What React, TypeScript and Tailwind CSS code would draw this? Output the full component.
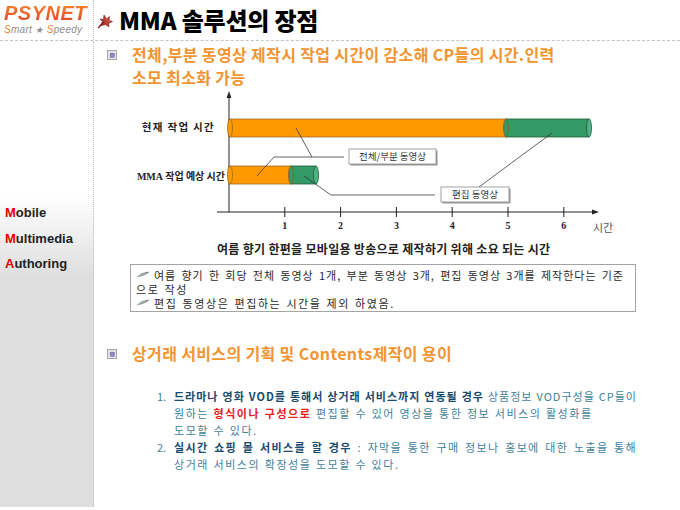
const KR = "'Noto Sans CJK KR', 'Noto Sans', sans-serif"

function BulletIcon({ className = '' }: { className?: string }) {
  return (
    <svg width="10" height="10" viewBox="0 0 10 10" className={className}>
      <rect x="0.5" y="0.5" width="9" height="9" fill="#f2f2f2" stroke="#a8a8a8" />
      <rect x="1.5" y="1.5" width="7" height="7" fill="#ffffff" stroke="#d4d4d4" strokeWidth="0.6" />
      <rect x="3" y="3" width="4.5" height="4.5" fill="#9386c4" stroke="#6f63a3" strokeWidth="0.5" />
    </svg>
  )
}

function QuillIcon() {
  return (
    <svg width="14" height="8" viewBox="0 0 14 8" className="inline-block align-[1px] mr-[4px]">
      <path d="M0.5 6.5 C3 3.2, 8 0.8, 13.5 0.8 C11 3.4, 6 5.6, 0.5 6.5 Z" fill="#7d8a86" />
      <path d="M2 5.6 L9 2.2" stroke="#d9dfdc" strokeWidth="0.7" />
    </svg>
  )
}

function LeafIcon() {
  return (
    <svg width="16" height="17" viewBox="0 0 16 17">
      <path
        d="M3 14 L5.5 9.5 L3 7 L6.5 7.5 L7 3 L9.5 7 L12.5 4.5 L12 8.5 L15.5 9.5 L11.5 11.5 L12 15 L8.5 12.5 Z"
        fill="#b6382e"
        stroke="#7a1f19"
        strokeWidth="0.6"
      />
      <path d="M1 16 L7 10" stroke="#7a1f19" strokeWidth="1.2" />
      <path d="M8 8 L11 6.5 M8.5 10 L13 9.5" stroke="#e0857a" strokeWidth="0.6" />
    </svg>
  )
}

function Heading({ children }: { children: React.ReactNode }) {
  return (
    <div className="flex items-start pl-[13px]">
      <BulletIcon className="mt-[7px] shrink-0" />
      <h2 className="ml-[15px] text-[16px] leading-[23px] font-bold text-[#f29431] tracking-[0.35px] whitespace-nowrap">
        {children}
      </h2>
    </div>
  )
}

function Bar({ y, orangeEnd, greenEnd }: { y: number; orangeEnd: number; greenEnd: number }) {
  const h = 18
  const ry = h / 2
  return (
    <g>
      <rect x={230} y={y} width={orangeEnd - 230} height={h} fill="#ff9900" stroke="#9a6b2c" strokeWidth="0.8" />
      <rect x={orangeEnd} y={y} width={greenEnd - orangeEnd} height={h} fill="#339966" stroke="#1d5c3c" strokeWidth="0.8" />
      <ellipse cx={231} cy={y + ry} rx={2.5} ry={ry} fill="#ff9900" stroke="#9a6b2c" strokeWidth="0.8" />
      <ellipse cx={orangeEnd} cy={y + ry} rx={2.5} ry={ry} fill="#339966" stroke="#8a5a22" strokeWidth="0.8" />
      <ellipse cx={greenEnd} cy={y + ry} rx={2.5} ry={ry} fill="#52b382" stroke="#1d5c3c" strokeWidth="0.8" />
    </g>
  )
}

function Callout({ x, y, w, label }: { x: number; y: number; w: number; label: string }) {
  return (
    <g>
      <rect x={x + 1.5} y={y + 1.5} width={w} height={15} fill="#9a9a9a" />
      <rect x={x} y={y} width={w} height={15} fill="#ffffff" stroke="#8a8a8a" strokeWidth="0.8" />
      <text x={x + w / 2} y={y + 11} textAnchor="middle" fontSize="9.5" fill="#333" fontFamily={KR}>
        {label}
      </text>
    </g>
  )
}

function Chart() {
  const ticks = [1, 2, 3, 4, 5, 6]
  return (
    <svg width="585" height="152" viewBox="95 89 585 152" className="block">
      <line x1={230} y1={97} x2={230} y2={212} stroke="#222" strokeWidth="1" />
      <polygon points="230,91 227.6,98 232.4,98" fill="#222" />
      <line x1={218} y1={212} x2={594} y2={212} stroke="#222" strokeWidth="1" />
      <polygon points="600,212 593,209.6 593,214.4" fill="#222" />
      {ticks.map((t) => {
        const x = 230 + t * 55.8
        return (
          <g key={t}>
            <line x1={x} y1={207} x2={x} y2={217} stroke="#222" strokeWidth="1" />
            <text x={x} y={229} textAnchor="middle" fontSize="10" fontWeight="bold" fontFamily="'Liberation Serif', serif" fill="#222">
              {t}
            </text>
          </g>
        )
      })}
      <text x={594} y={232} fontSize="11" fill="#555" fontFamily={KR}>
        시간
      </text>

      <text x={216} y={131} textAnchor="end" fontSize="10.5" letterSpacing="1.3" fontWeight="bold" fill="#222" fontFamily={KR}>
        현재 작업 시간
      </text>
      <text x={226} y={180} textAnchor="end" fontSize="10" fontWeight="bold" fill="#222" fontFamily={KR}>
        <tspan fontFamily="'Liberation Serif', serif" fontSize="10">MMA</tspan> 작업 예상 시간
      </text>

      <Bar y={119} orangeEnd={507} greenEnd={590} />
      <Bar y={166} orangeEnd={292} greenEnd={317} />

      <g stroke="#3a3a3a" strokeWidth="0.8" fill="none">
        <polyline points="297,128 313,157" />
        <polyline points="258,176 275,157 345,157" />
        <polyline points="553,133 480,187" />
        <polyline points="305,176 332,195 436,195" />
      </g>

      <Callout x={350} y={149} w={87} label="전체/부분 동영상" />
      <Callout x={442} y={187} w={68} label="편집 동영상" />
    </svg>
  )
}

export default function App() {
  return (
    <div className="w-[680px] h-[510px] bg-white overflow-hidden flex flex-col" style={{ fontFamily: KR }}>
      <header className="h-[41px] shrink-0 flex border-b border-dashed border-[#c4c4c4]">
        <div className="w-[94px] shrink-0 border-r border-dotted border-[#bcbcbc] pl-[4px] pt-[3px]">
          <div className="font-['Liberation_Sans',sans-serif] italic font-bold text-[20px] leading-[20px] tracking-[0.5px] bg-gradient-to-b from-[#f6862c] to-[#e1402a] bg-clip-text text-transparent w-fit pr-[2px]">
            PSYNET
          </div>
          <div className="mt-[1px] font-['Liberation_Sans',sans-serif] italic text-[10px] leading-[11px] text-[#8c8c8c] tracking-[0.3px] whitespace-nowrap">
            <span className="text-[#ee7a33]">S</span>mart <span className="text-[9px]">★</span> <span className="text-[#ee7a33]">S</span>peedy
          </div>
        </div>
        <div className="flex items-center pl-[3px] gap-[6px]">
          <LeafIcon />
          <h1 className="text-[24px] font-black text-black tracking-[-0.2px] leading-none">MMA 솔루션의 장점</h1>
        </div>
      </header>

      <div className="flex flex-1 min-h-0">
        <aside className="w-[94px] h-[466px] shrink-0 border-r border-dotted border-[#bcbcbc] bg-[linear-gradient(to_bottom,#ffffff_0px,#ffffff_155px,#dedede_236px,#dedede_100%)] pl-[5px] pt-[159px] font-['Liberation_Sans',sans-serif] font-bold text-[13px] leading-[25.5px] text-[#222]">
          <div>
            <span className="text-[#e00000]">M</span>obile
          </div>
          <div>
            <span className="text-[#e00000]">M</span>ultimedia
          </div>
          <div>
            <span className="text-[#e00000]">A</span>uthoring
          </div>
        </aside>

        <main className="flex-1 pt-[2px]">
          <Heading>
            전체,부분 동영상 제작시 작업 시간이 감소해 CP들의 시간.인력
            <br />
            소모 최소화 가능
          </Heading>

          <Chart />

          <p className="ml-[123px] text-[12px] leading-[16px] font-bold tracking-[0.3px] text-[#222] whitespace-nowrap">
            여름 향기 한편을 모바일용 방송으로 제작하기 위해 소요 되는 시간
          </p>

          <div className="mt-[7px] ml-[36px] w-[506px] border border-[#a4a4a4] pl-[5px] pr-[11px] pt-[3px] pb-[1px] text-[11px] leading-[14px] tracking-[1.6px] [word-spacing:1px] text-[#2a2a2a]">
            <div className="[text-align-last:justify] whitespace-nowrap tracking-[1px]">
              <QuillIcon />
              여름 향기 한 회당 전체 동영상 1개, 부분 동영상 3개, 편집 동영상 3개를 제작한다는 기준
            </div>
            <div>으로 작성</div>
            <div>
              <QuillIcon />
              편집 동영상은 편집하는 시간을 제외 하였음.
            </div>
          </div>

          <div className="mt-[30px]">
            <Heading>상거래 서비스의 기획 및 Contents제작이 용이</Heading>
          </div>

          <ol className="mt-[23px] ml-[63px] text-[11px] leading-[17px] text-[#3f7f9a] whitespace-nowrap">
            <li className="flex">
              <span className="w-[17px] shrink-0">1.</span>
              <div className="w-[463px] tracking-[1.55px] [word-spacing:0.5px]">
                <div className="[text-align-last:justify] tracking-[1px]">
                  <b className="text-[#174a6e]">드라마나 영화 VOD를 통해서 상거래 서비스까지 연동될 경우</b> 상품정보 VOD구성을 CP들이
                </div>
                <div>
                  원하는 <b className="text-[#e4221c]">형식이나 구성으로</b> 편집할 수 있어 영상을 통한 정보 서비스의 활성화를
                </div>
                <div>도모할 수 있다.</div>
              </div>
            </li>
            <li className="flex">
              <span className="w-[17px] shrink-0">2.</span>
              <div className="w-[463px] tracking-[1.55px] [word-spacing:0.5px]">
                <div className="[text-align-last:justify] tracking-[1.35px]">
                  <b className="text-[#174a6e]">실시간 쇼핑 몰 서비스를 할 경우</b> : 자막을 통한 구매 정보나 홍보에 대한 노출을 통해
                </div>
                <div>상거래 서비스의 확장성을 도모할 수 있다.</div>
              </div>
            </li>
          </ol>
        </main>
      </div>
    </div>
  )
}
